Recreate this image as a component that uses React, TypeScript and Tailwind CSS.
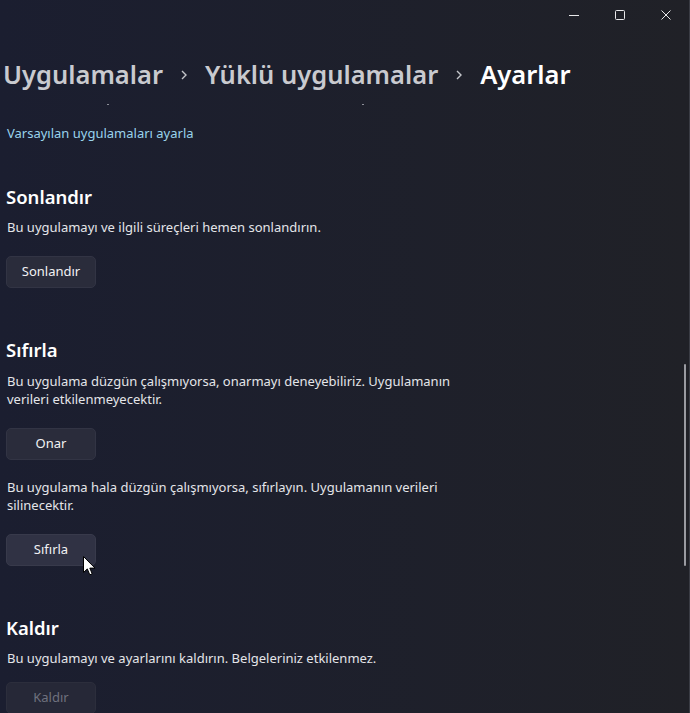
import React from "react";

const font = { fontFamily: '"Noto Sans", "Open Sans", sans-serif' };

function WindowControls() {
  return (
    <div className="flex h-[30px] items-center justify-end pr-[19px] gap-[36px] text-[#e8e8ea]">
      <svg width="10" height="10" viewBox="0 0 10 10">
        <path d="M0 5.5H10" stroke="currentColor" strokeWidth="1" />
      </svg>
      <svg width="10" height="10" viewBox="0 0 10 10">
        <rect x="0.5" y="0.5" width="9" height="9" rx="1" fill="none" stroke="currentColor" strokeWidth="1" />
      </svg>
      <svg width="10" height="10" viewBox="0 0 10 10">
        <path d="M0.5 0.5L9.5 9.5M9.5 0.5L0.5 9.5" stroke="currentColor" strokeWidth="1" />
      </svg>
    </div>
  );
}

function Chevron() {
  return (
    <svg width="10" height="12" viewBox="0 0 10 12" className="mx-[16px] mt-[2px] text-[#c4c5ca]">
      <path d="M3 2L7 6L3 10" fill="none" stroke="currentColor" strokeWidth="1.4" />
    </svg>
  );
}

function Btn({ label, hover, disabled }: { label: string; hover?: boolean; disabled?: boolean }) {
  return (
    <button
      className={
        "w-[90px] h-[32px] rounded-[5px] border text-[13px] " +
        (disabled
          ? "bg-[#262837] border-[#2c2e3c] text-[#6f717e]"
          : hover
          ? "bg-[#303244] border-[#383a4b] text-[#f2f2f4]"
          : "bg-[#2a2c3b] border-[#323444] text-[#f2f2f4]")
      }
    >
      {label}
    </button>
  );
}

export default function App() {
  return (
    <div
      className="relative w-[690px] h-[713px] overflow-hidden bg-linear-to-r from-[#1b1e30] to-[#202127]"
      style={font}
    >
      <WindowControls />

      {/* breadcrumb */}
      <div className="mt-[26px] flex items-center h-[36px] pl-[3px] text-[25.5px] font-semibold leading-[36px]">
        <span className="text-[#c9cacf]">Uygulamalar</span>
        <Chevron />
        <span className="text-[#c9cacf]">Yüklü uygulamalar</span>
        <Chevron />
        <span className="text-white">Ayarlar</span>
      </div>

      <div className="relative h-[1px] mt-[12px]">
        <span className="absolute left-[107px] top-0 w-[2px] h-[1px] bg-[#8c8e98]" />
        <span className="absolute left-[362px] top-0 w-[2px] h-[1px] bg-[#8c8e98]" />
      </div>

      <div className="pl-[6px]">
        <div className="mt-[18px] pl-[1px] text-[13px] leading-[20px] text-[#99d3ec]">Varsayılan uygulamaları ayarla</div>

        <div className="mt-[40px] text-[18.5px] leading-[28px] font-semibold text-white">Sonlandır</div>
        <div className="mt-[7px] pl-[1px] text-[13px] leading-[18px] text-[#e4e5e9]">
          Bu uygulamayı ve ilgili süreçleri hemen sonlandırın.
        </div>
        <div className="mt-[20px]">
          <Btn label="Sonlandır" />
        </div>

        <div className="mt-[48px] text-[18.5px] leading-[28px] font-semibold text-white">Sıfırla</div>
        <div className="mt-[8px] pl-[1px] text-[13px] leading-[18px] text-[#e4e5e9]">
          Bu uygulama düzgün çalışmıyorsa, onarmayı deneyebiliriz. Uygulamanın
          <br />
          verileri etkilenmeyecektir.
        </div>
        <div className="mt-[20px]">
          <Btn label="Onar" />
        </div>
        <div className="mt-[18px] pl-[1px] text-[13px] leading-[18px] text-[#e4e5e9]">
          Bu uygulama hala düzgün çalışmıyorsa, sıfırlayın. Uygulamanın verileri
          <br />
          silinecektir.
        </div>
        <div className="mt-[20px]">
          <Btn label="Sıfırla" hover />
        </div>

        <div className="mt-[48px] text-[18.5px] leading-[28px] font-semibold text-white">Kaldır</div>
        <div className="mt-[7px] pl-[1px] text-[13px] leading-[18px] text-[#e4e5e9]">
          Bu uygulamayı ve ayarlarını kaldırın. Belgeleriniz etkilenmez.
        </div>
        <div className="mt-[15px]">
          <Btn label="Kaldır" disabled />
        </div>
      </div>

      {/* scrollbar */}
      <div className="absolute right-[4px] top-[364px] w-[2px] h-[202px] rounded-full bg-[#9a9ba1]" />
      <div className="absolute right-0 top-0 w-[1px] h-full bg-[#3a3c44]" />

      {/* mouse cursor */}
      <svg className="absolute left-[83px] top-[556px]" width="13" height="20" viewBox="0 0 13 20">
        <path d="M0.5 0.5V16.5L4.3 12.9L6.8 18.8L9.2 17.8L6.8 12.1H12L0.5 0.5Z" fill="white" stroke="black" strokeWidth="1" />
      </svg>
    </div>
  );
}
